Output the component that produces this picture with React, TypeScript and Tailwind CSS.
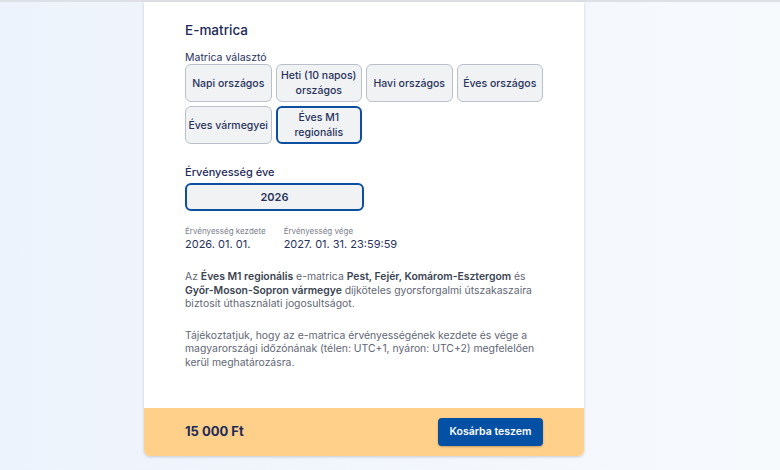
import React from 'react';

const options = [
  { label: 'Napi országos' },
  { label: 'Heti (10 napos) országos' },
  { label: 'Havi országos' },
  { label: 'Éves országos' },
  { label: 'Éves vármegyei' },
  { label: 'Éves M1 regionális', selected: true },
];

const OptionButton = ({ label, selected }: { label: string; selected?: boolean }) => (
  <button
    className={
      selected
        ? 'h-[38px] rounded-[6px] border-2 border-[#0b4f9e] bg-[#f1f2f4] px-[8px] text-[10.5px] leading-[15px] font-medium text-[#27325c]'
        : 'h-[38px] rounded-[6px] border border-[#b9c0c9] bg-[#f1f2f4] px-[2px] text-[10.5px] leading-[15px] font-medium text-[#27325c]'
    }
  >
    {label}
  </button>
);

const App: React.FC = () => {
  return (
    <div
      className="relative h-[470px] w-[780px] overflow-hidden bg-gradient-to-r from-[#edf3fc] to-[#f7fafd]"
      style={{ fontFamily: 'Inter, "Noto Sans", sans-serif' }}
    >
      <div className="h-[2px] w-full bg-[#dde1e6]"></div>
      <div className="ml-[144px] w-[440px] rounded-b-[6px] bg-white shadow-[0_1px_3px_rgba(0,0,0,0.18)]">
        <div className="px-[41px] pt-[18px] pb-[39px]">
          <h2 className="text-[13.5px] leading-5 font-medium text-[#1d2a57]">E-matrica</h2>
          <div className="mt-[11px] text-[10.5px] leading-[13px] text-[#27325c]">Matrica választó</div>
          <div className="grid grid-cols-4 gap-[4px]">
            {options.map((o) => (
              <OptionButton key={o.label} label={o.label} selected={o.selected} />
            ))}
          </div>

          <div className="mt-[20px] text-[11px] leading-4 font-medium text-[#1d2a57]">Érvényesség éve</div>
          <div className="mt-[3px] grid grid-cols-2">
            <div className="flex h-[28px] items-center justify-center rounded-[6px] border-2 border-[#0b4f9e] bg-[#f1f2f4] text-[11px] font-semibold text-[#27325c]">
              2026
            </div>
          </div>

          <div className="mt-[15px] flex gap-[18px]">
            <div>
              <div className="text-[8px] leading-[10px] text-[#7a808c]">Érvényesség kezdete</div>
              <div className="text-[11px] leading-4 text-[#27325c]">2026. 01. 01.</div>
            </div>
            <div>
              <div className="text-[8px] leading-[10px] text-[#7a808c]">Érvényesség vége</div>
              <div className="text-[11px] leading-4 text-[#27325c]">2027. 01. 31. 23:59:59</div>
            </div>
          </div>

          <p className="mt-[18px] text-[10.4px] leading-[13.5px] text-[#5f6674]">
            Az <strong className="font-semibold text-[#3b4452]">Éves M1 regionális</strong> e-matrica{' '}
            <strong className="font-semibold text-[#3b4452]">Pest, Fejér, Komárom-Esztergom</strong> és{' '}
            <strong className="font-semibold text-[#3b4452]">Győr-Moson-Sopron vármegye</strong> díjköteles gyorsforgalmi
            útszakaszaira biztosít úthasználati jogosultságot.
          </p>
          <p className="mt-[18px] text-[10.4px] leading-[13.5px] text-[#5f6674]">
            Tájékoztatjuk, hogy az e-matrica érvényességének kezdete és vége a magyarországi időzónának (télen: UTC+1,
            nyáron: UTC+2) megfelelően kerül meghatározásra.
          </p>
        </div>

        <div className="flex h-[48px] items-center justify-between rounded-b-[6px] bg-[#fed08a] px-[41px]">
          <span className="text-[13px] font-bold text-[#1d2a57]">15 000 Ft</span>
          <button className="h-[28px] w-[105px] rounded-[4px] bg-[#0450a4] text-[10.5px] font-semibold text-white shadow-[0_1px_2px_rgba(0,0,0,0.25)]">
            Kosárba teszem
          </button>
        </div>
      </div>
    </div>
  );
};

export default App;
